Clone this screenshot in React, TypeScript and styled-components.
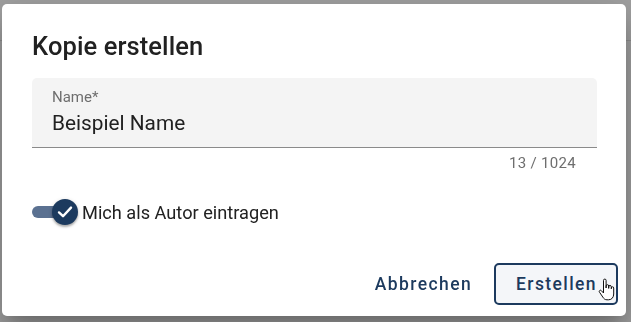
import React from "react";
import styled, { createGlobalStyle } from "styled-components";

const GlobalStyle = createGlobalStyle`
  html, body {
    margin: 0;
    padding: 0;
    background: #a1a1a1;
    font-family: Roboto, "Liberation Sans", sans-serif;
    -webkit-font-smoothing: antialiased;
  }
`;

const Page = styled("div")`
  width: 631px;
  height: 322px;
  overflow: hidden;
`;

const PageHeader = styled("div")`
  height: 40px;
  border-bottom: 1px solid #8e8e8e;
`;

const Dialog = styled("div")`
  position: fixed;
  left: 2px;
  top: 4px;
  width: 624px;
  height: 312px;
  box-sizing: border-box;
  background: #fff;
  border-radius: 5px;
  padding: 26px 8px 0 30px;
  display: flex;
  flex-direction: column;
  box-shadow: 0 11px 15px -7px rgba(0, 0, 0, 0.2),
    0 24px 38px 3px rgba(0, 0, 0, 0.14), 0 9px 46px 8px rgba(0, 0, 0, 0.12);
`;

const Title = styled("h2")`
  margin: 0 0 16px 0;
  font-size: 25.5px;
  line-height: 32px;
  font-weight: 500;
  color: #212121;
  letter-spacing: 0.1px;
`;

const Field = styled("div")`
  width: 565px;
  box-sizing: border-box;
  background: #f4f4f4;
  border-radius: 5px 5px 0 0;
  border-bottom: 1px solid #8a8a8a;
  padding: 10px 20px 12px;
`;

const FieldLabel = styled("div")`
  font-size: 15px;
  line-height: 18px;
  color: #6e6e6e;
  margin-bottom: 5px;
`;

const FieldValue = styled("div")`
  font-size: 20.8px;
  line-height: 24px;
  color: #212121;
`;

const Counter = styled("div")`
  width: 565px;
  box-sizing: border-box;
  padding-right: 21px;
  margin-top: 6px;
  text-align: right;
  font-size: 15px;
  line-height: 18px;
  color: #6e6e6e;
  letter-spacing: 0.3px;
`;

const ToggleRow = styled("label")`
  display: flex;
  align-items: center;
  gap: 4px;
  margin-top: 27px;
  height: 26px;
  font-size: 18.2px;
  color: #212121;
`;

const Switch = styled("span")`
  position: relative;
  width: 46px;
  height: 26px;
  flex: none;
`;

const Track = styled("span")`
  display: block;
  position: absolute;
  left: 0;
  top: 7px;
  width: 40px;
  height: 12px;
  border-radius: 6px;
  background: #5b7191;
`;

const Thumb = styled("span")`
  position: absolute;
  left: 20px;
  top: 0;
  width: 26px;
  height: 26px;
  border-radius: 50%;
  background: #1c3a5e;
  display: flex;
  align-items: center;
  justify-content: center;
  box-shadow: 0 2px 2px rgba(0, 0, 0, 0.25), 0 1px 4px rgba(0, 0, 0, 0.15);
`;

const Actions = styled("div")`
  display: flex;
  justify-content: flex-end;
  gap: 4px;
  margin-top: 38px;
`;

const Button = styled("button")<{ $outlined?: boolean }>`
  position: relative;
  height: 42px;
  box-sizing: border-box;
  padding: ${(p) => (p.$outlined ? "0 19px 0 20px" : "0 16px 0 18px")};
  border-radius: 5px;
  border: 2px solid ${(p) => (p.$outlined ? "#1c3a5e" : "transparent")};
  background: ${(p) => (p.$outlined ? "#f4f6f9" : "transparent")};
  color: #1c3a5e;
  font-family: Roboto, "Liberation Sans", sans-serif;
  font-size: 17.5px;
  font-weight: 500;
  letter-spacing: 1.4px;
  cursor: pointer;
`;

const Cursor = styled("svg")`
  position: absolute;
  left: 102px;
  top: 13px;
  pointer-events: none;
`;

const Check = () => (
  <svg width="18" height="18" viewBox="0 0 18 18">
    <path
      d="M3 9.4 L7 13.2 L15 4.6"
      fill="none"
      stroke="#fff"
      strokeWidth="2.4"
      strokeLinecap="round"
      strokeLinejoin="round"
    />
  </svg>
);

const HandCursor = () => (
  <Cursor width="17" height="24" viewBox="0 0 17 24">
    <path
      d="M5.5 11 V2.4 a1.3 1.3 0 0 1 2.6 0 V10 V8 a1.3 1.3 0 0 1 2.6 0 V10.4 V8.8 a1.3 1.3 0 0 1 2.6 0 V10.8 V10 a1.2 1.2 0 0 1 2.4 0 V16 c0 3.4-2 5.8-5.2 5.8 H9 c-2 0-3.1-1-4.1-2.6 L1.5 14.2 a1.2 1.2 0 0 1 1.9-1.5 L5.5 15 Z"
      fill="#fff"
      stroke="#111"
      strokeWidth="1"
      strokeLinejoin="round"
    />
  </Cursor>
);

export default function App() {
  return (
    <Page>
      <GlobalStyle />
      <PageHeader />
      <Dialog>
        <Title>Kopie erstellen</Title>
        <Field>
          <FieldLabel>Name*</FieldLabel>
          <FieldValue>Beispiel Name</FieldValue>
        </Field>
        <Counter>13 / 1024</Counter>
        <ToggleRow>
          <Switch>
            <Track />
            <Thumb>
              <Check />
            </Thumb>
          </Switch>
          Mich als Autor eintragen
        </ToggleRow>
        <Actions>
          <Button>Abbrechen</Button>
          <Button $outlined>
            Erstellen
            <HandCursor />
          </Button>
        </Actions>
      </Dialog>
    </Page>
  );
}
